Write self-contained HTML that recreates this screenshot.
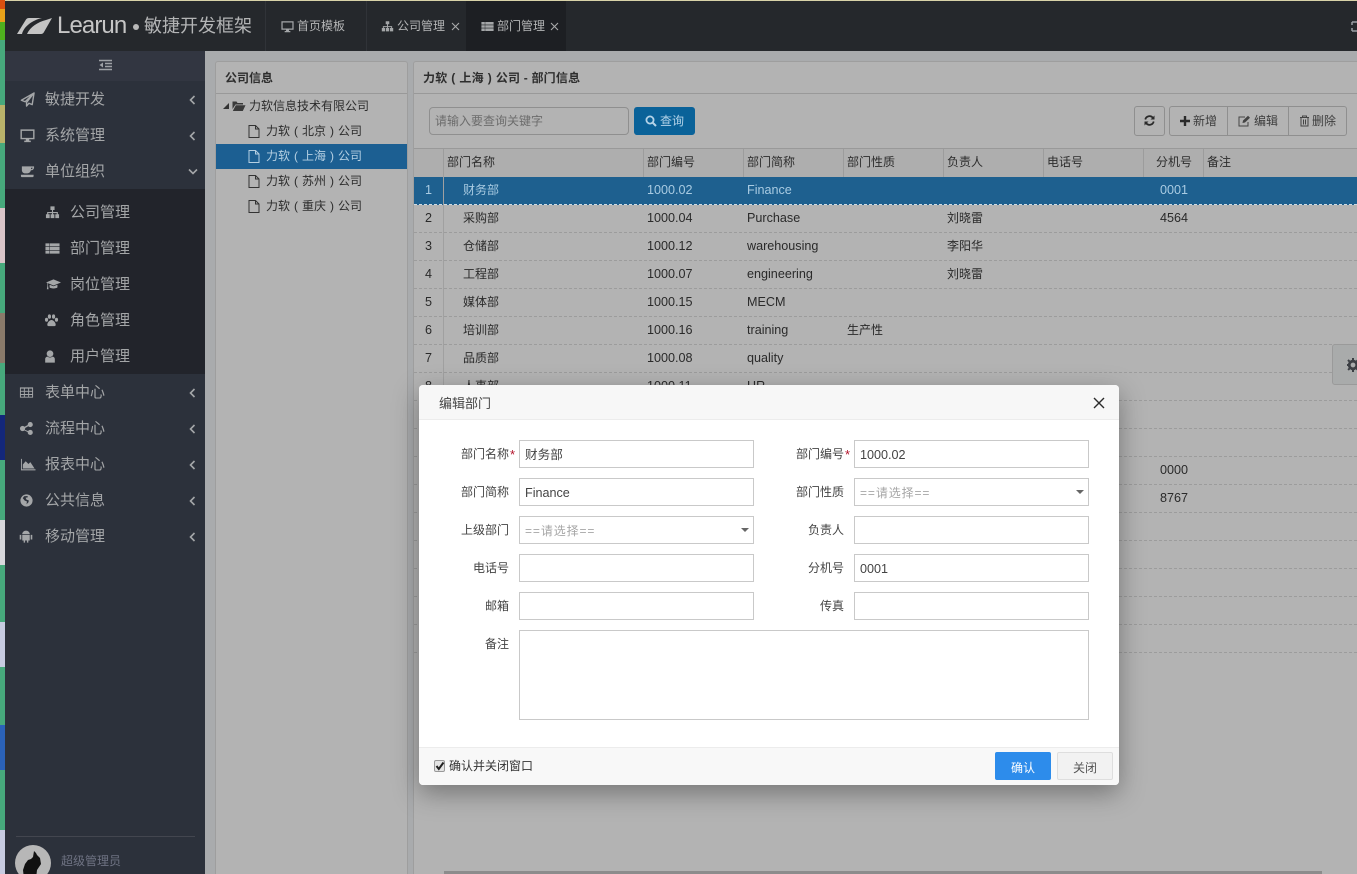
<!DOCTYPE html>
<html lang="zh-CN"><head><meta charset="utf-8"><title>部门管理</title>
<style>
*{box-sizing:border-box}
html,body{margin:0;padding:0;width:1357px;height:874px;overflow:hidden;background:#a9abad;font-family:"Liberation Sans","Noto Sans CJK SC",sans-serif;font-size:12px;color:#2b2b2b}
#w{position:relative;width:1357px;height:874px;overflow:hidden}
.a{position:absolute}
.t{position:absolute;white-space:nowrap;line-height:20px;height:20px}
svg{position:absolute;display:block}
.p{display:inline-block;width:1em;text-align:center}
.side{font-size:15px;color:#a4a6a8;left:45px}
.sub{font-size:15px;color:#a4a6a8;left:70px}
.ic{fill:#a4a6a8}
.ch{fill:none;stroke:#a4a6a8;stroke-width:1.6}
.tab{color:#b4b5b6;font-size:12px;top:16px}
.tr{color:#2c2c2c;font-size:12px;left:266px}
.row{position:absolute;left:414px;width:943px;height:28px;border-bottom:1px dashed #9c9c9c}
.row span{position:absolute;top:3px;line-height:20px;white-space:nowrap;font-size:12.6px;color:#2a2a2a}
.th{top:152px;color:#2d2d2d}
.vl{position:absolute;top:149px;height:28px;width:1px;background:#9c9c9c}
.lb{position:absolute;font-size:12px;color:#444;text-align:right;width:70px;line-height:20px;white-space:nowrap}
.in{position:absolute;width:235px;height:28px;border:1px solid #c9c9c9;background:#fff;font-size:12.6px;color:#444;padding-left:5px;line-height:28px;white-space:nowrap}
.ph{color:#a6a6a6;font-size:12px;letter-spacing:.9px}
.star{position:absolute;color:#b3122a;font-size:13px;line-height:20px}
.arr{position:absolute;width:0;height:0;border-left:4px solid transparent;border-right:4px solid transparent;border-top:4px solid #666}
</style></head><body><div id="w">
<svg width="0" height="0" style="position:absolute"><defs>
<symbol id="plane" viewBox="0 0 16 16"><path fill="none" stroke="#a4a6a8" stroke-width="1.500" stroke-linejoin="round" d="M15 1 1.500 8.800l4 1.600L15 1 7 11.200V15l2.500-3 3.500 1.500z"/></symbol>
<symbol id="desk" viewBox="0 0 16 16"><path fill-rule="evenodd" d="M.5 1.500h15v10.500H9.800v1.500h1.700V15h-7v-1.500h1.700V12H.5zM2 3v7.500h12V3z"/></symbol>
<symbol id="cup" viewBox="0 0 16 16"><path fill-rule="evenodd" d="M2 2.500h13v1.200a3 3 0 0 1-3 3h-.4C11 9 9.500 10 8 10H5.500C3.500 10 2 8.500 2 6.500zM11.800 4v1.400c1 0 1.700-.5 1.700-1.400zM1 11.500h13.500v1.500q-.3 1-1 1H2q-.8 0-1-1z"/></symbol>
<symbol id="site" viewBox="0 0 16 16"><path d="M5.800 1.500h4.400v3.800H8.600v2.200h5.100v2.300H15V14h-4V9.800h1.500V8.700H8.600v1.100H10V14H6V9.800h1.400V8.700H3.500v1.100H5V14H1V9.800h1.300V7.500h5.100V5.300H5.800z"/></symbol>
<symbol id="list" viewBox="0 0 16 16"><path d="M.5 2.500h4.200v3.200H.5zM5.200 2.500h10.300v3.200H5.200zM.5 6.400h4.200v3.200H.5zM5.200 6.400h10.300v3.200H5.200zM.5 10.300h4.200v3.200H.5zM5.200 10.300h10.300v3.200H5.200z"/></symbol>
<symbol id="cap" viewBox="0 0 16 16"><path d="M8 2.500 16 5.800 8 9 2.200 6.700v2.600l.5 3.700H.9l.6-3.700V6.400L0 5.800zM3.800 8.200 8 9.900l4.200-1.700v2.900C11 12.600 5 12.600 3.800 11.100z"/></symbol>
<symbol id="paw" viewBox="0 0 16 16"><ellipse cx="2.700" cy="7.200" rx="1.700" ry="2.100"/><ellipse cx="5.800" cy="3.800" rx="1.700" ry="2.300"/><ellipse cx="10.200" cy="3.800" rx="1.700" ry="2.300"/><ellipse cx="13.300" cy="7.200" rx="1.700" ry="2.100"/><path d="M8 7.500c2.200 0 4.500 3 4.500 5 0 2-2.300 1.500-4.500 1.500s-4.500.5-4.500-1.500c0-2 2.300-5 4.500-5z"/></symbol>
<symbol id="user" viewBox="0 0 16 16"><circle cx="8" cy="4.800" r="3.800"/><path d="M2.500 15V11c0-1.800 1.500-2.800 2.800-2.800C6.500 9.500 9.500 9.500 10.700 8.200c1.300 0 2.800 1 2.800 2.800v4z"/></symbol>
<symbol id="tab" viewBox="0 0 16 16"><path fill-rule="evenodd" d="M1 2.500h14v11H1zM2 3.800v2.400h3.200V3.800zM6.200 3.800v2.400h3.600V3.800zM10.800 3.800v2.400H14V3.800zM2 7.200v2.400h3.200V7.200zM6.200 7.200v2.400h3.600V7.200zM10.800 7.200v2.400H14V7.200zM2 10.600v1.900h3.200v-1.900zM6.200 10.600v1.900h3.600v-1.900zM10.800 10.600v1.900H14v-1.900z"/></symbol>
<symbol id="share" viewBox="0 0 16 16"><circle cx="12" cy="3.800" r="2.700"/><circle cx="12" cy="12.200" r="2.700"/><circle cx="3.800" cy="8" r="2.800"/><path d="M3.800 7.300 11.500 3l.7 1.300L4.500 8.700 12.200 11.700l-.5 1.300L3.800 9z"/></symbol>
<symbol id="area" viewBox="0 0 16 16"><path d="M.5 2H1.500v11H16v1.200H.5zM2.500 12.200V8l3-3.500 3 3 2-2 4.500 6.700z"/></symbol>
<symbol id="globe" viewBox="0 0 16 16"><path fill-rule="evenodd" d="M8 1.500a6.500 6.500 0 1 1 0 13 6.500 6.500 0 0 1 0-13zM4 5.500 6 8l2.500 1-.5 3 2-2 .5-2-2.500-1-1-2 2.500-.5L9 3.200 5.500 3.500z"/></symbol>
<symbol id="droid" viewBox="0 0 16 16"><path d="M4 5.500a4 3.800 0 0 1 8 0zM4 6.200h8v6H10.500v2.300H9v-2.300H7v2.300H5.500v-2.300H4zM1.300 6.200h1.700v5H1.300zM13 6.200h1.700v5H13z"/></symbol>
</defs></svg>

<!-- left strip -->
<div class="a" style="left:0;top:0;width:5px;height:874px;background:#47a97c"></div>
<div class="a" style="left:0;top:0;width:5px;height:9px;background:#d9500f"></div>
<div class="a" style="left:0;top:9px;width:5px;height:13px;background:#e8a21a"></div>
<div class="a" style="left:0;top:22px;width:5px;height:18px;background:#4fb01e"></div>
<div class="a" style="left:0;top:105px;width:5px;height:38px;background:#b9b26a"></div>
<div class="a" style="left:0;top:208px;width:5px;height:55px;background:#d9c4c8"></div>
<div class="a" style="left:0;top:313px;width:5px;height:50px;background:#8a7a6a"></div>
<div class="a" style="left:0;top:415px;width:5px;height:45px;background:#13277a"></div>
<div class="a" style="left:0;top:520px;width:5px;height:45px;background:#d8d8dc"></div>
<div class="a" style="left:0;top:622px;width:5px;height:45px;background:#c7cbe0"></div>
<div class="a" style="left:0;top:725px;width:5px;height:45px;background:#2b62b8"></div>
<div class="a" style="left:0;top:830px;width:5px;height:44px;background:#c7cbe0"></div>

<!-- header -->
<div class="a" style="left:5px;top:0;width:1352px;height:1px;background:#d8d2a8"></div>
<div class="a" style="left:5px;top:1px;width:1352px;height:50px;background:#25282c"></div>
<svg style="left:0;top:0" width="60" height="40"><path fill="#c4c4c4" d="M17 34 26 19.500Q27 18 29 18H42C33 20 24 26 22 34ZM27 34C30 27 38 22 46 20L52 18 44 32Q43 34 41 34Z"/></svg>
<div class="t" style="left:57px;top:14px;font-size:24px;line-height:24px;height:24px;color:#c6c6c6;letter-spacing:-.9px">Learun</div>
<div class="a" style="left:133px;top:24px;width:6px;height:6px;border-radius:50%;background:#b8b8b8"></div>
<div class="t" style="left:144px;top:14px;font-size:18px;line-height:24px;height:24px;color:#b4b5b6">敏捷开发框架</div>
<div class="a" style="left:265px;top:1px;width:1px;height:50px;background:#303338"></div>
<div class="a" style="left:366px;top:1px;width:1px;height:50px;background:#303338"></div>
<div class="a" style="left:466px;top:1px;width:100px;height:50px;background:#1d1f23"></div>
<svg class="ic" style="left:281px;top:20px" width="13" height="13"><use href="#desk"/></svg>
<div class="t tab" style="left:297px">首页模板</div>
<svg class="ic" style="left:381px;top:20px" width="13" height="13"><use href="#site"/></svg>
<div class="t tab" style="left:397px">公司管理</div>
<svg style="left:451px;top:22px" width="9" height="9"><path d="M1 1l7 7M8 1l-7 7" stroke="#a8a9aa" stroke-width="1.100"/></svg>
<svg class="ic" style="left:481px;top:20px" width="13" height="13"><use href="#list"/></svg>
<div class="t tab" style="left:497px">部门管理</div>
<svg style="left:550px;top:22px" width="9" height="9"><path d="M1 1l7 7M8 1l-7 7" stroke="#a8a9aa" stroke-width="1.100"/></svg>
<svg style="left:1351px;top:20px" width="6" height="13"><path d="M1 2h5M1 2v3M1 11h5M1 11V8" stroke="#9a9da3" stroke-width="1.500" fill="none"/></svg>

<!-- sidebar -->
<div class="a" style="left:5px;top:51px;width:200px;height:823px;background:#2c313b"></div>
<div class="a" style="left:5px;top:51px;width:200px;height:30px;background:#323641"></div>
<div class="a" style="left:5px;top:189px;width:200px;height:185px;background:#22242b"></div>
<svg style="left:98px;top:59px" width="15" height="13"><path d="M1 1.500h13M7 4.500h7M7 7.500h7M1 10.500h13" stroke="#9ea1a6" stroke-width="1.500"/><path d="M5 3.500v5l-3.500-2.500z" fill="#9ea1a6"/></svg>

<svg style="left:20px;top:92px" width="15" height="15"><use href="#plane"/></svg><div class="t side" style="top:90px">敏捷开发</div>
<svg class="ic" style="left:20px;top:128px" width="15" height="15"><use href="#desk"/></svg><div class="t side" style="top:126px">系统管理</div>
<svg class="ic" style="left:20px;top:164px" width="15" height="15"><use href="#cup"/></svg><div class="t side" style="top:162px">单位组织</div>
<svg class="ch" style="left:189px;top:95px" width="7" height="10"><path d="M5.500 1 1.500 5l4 4"/></svg>
<svg class="ch" style="left:189px;top:131px" width="7" height="10"><path d="M5.500 1 1.500 5l4 4"/></svg>
<svg class="ch" style="left:188px;top:168px" width="10" height="7"><path d="M1 1.500l4 4 4-4"/></svg>

<svg class="ic" style="left:45px;top:205px" width="15" height="15"><use href="#site"/></svg><div class="t sub" style="top:203px">公司管理</div>
<svg class="ic" style="left:45px;top:241px" width="15" height="15"><use href="#list"/></svg><div class="t sub" style="top:239px">部门管理</div>
<svg class="ic" style="left:45px;top:277px" width="17" height="15"><use href="#cap"/></svg><div class="t sub" style="top:275px">岗位管理</div>
<svg class="ic" style="left:44px;top:313px" width="15" height="15"><use href="#paw"/></svg><div class="t sub" style="top:311px">角色管理</div>
<svg class="ic" style="left:43px;top:349px" width="14" height="15"><use href="#user"/></svg><div class="t sub" style="top:347px">用户管理</div>

<svg class="ic" style="left:19px;top:385px" width="15" height="15"><use href="#tab"/></svg><div class="t side" style="top:383px">表单中心</div>
<svg class="ic" style="left:19px;top:421px" width="15" height="15"><use href="#share"/></svg><div class="t side" style="top:419px">流程中心</div>
<svg class="ic" style="left:20px;top:457px" width="16" height="15"><use href="#area"/></svg><div class="t side" style="top:455px">报表中心</div>
<svg class="ic" style="left:19px;top:493px" width="15" height="15"><use href="#globe"/></svg><div class="t side" style="top:491px">公共信息</div>
<svg class="ic" style="left:18px;top:529px" width="16" height="15"><use href="#droid"/></svg><div class="t side" style="top:527px">移动管理</div>
<svg class="ch" style="left:189px;top:388px" width="7" height="10"><path d="M5.500 1 1.500 5l4 4"/></svg>
<svg class="ch" style="left:189px;top:424px" width="7" height="10"><path d="M5.500 1 1.500 5l4 4"/></svg>
<svg class="ch" style="left:189px;top:460px" width="7" height="10"><path d="M5.500 1 1.500 5l4 4"/></svg>
<svg class="ch" style="left:189px;top:496px" width="7" height="10"><path d="M5.500 1 1.500 5l4 4"/></svg>
<svg class="ch" style="left:189px;top:532px" width="7" height="10"><path d="M5.500 1 1.500 5l4 4"/></svg>

<div class="a" style="left:16px;top:836px;width:179px;height:1px;background:#43464f"></div>
<div class="a" style="left:15px;top:845px;width:36px;height:36px;border-radius:50%;background:#b7b7b7;overflow:hidden">
<svg style="left:6px;top:5px" width="24" height="29"><path d="M13 1l2 2 1 2 3 3 1 6-4 6-1 9H3l-1-9 2-6 3-4 3-1 2-2z" fill="#111"/></svg></div>
<div class="t" style="left:61px;top:851px;font-size:12px;color:#6e7282">超级管理员</div>

<!-- left panel -->
<div class="a" style="left:215px;top:61px;width:193px;height:830px;background:#b3b3b3;border:1px solid #9e9e9e;border-radius:3px"></div>
<div class="a" style="left:216px;top:93px;width:191px;height:1px;background:#999"></div>
<div class="t" style="left:225px;top:68px;font-weight:bold;color:#2e2e2e;font-size:12px">公司信息</div>
<svg style="left:222px;top:102px" width="8" height="8"><path d="M7 1v6H1z" fill="#333"/></svg>
<svg style="left:232px;top:100px" width="14" height="12"><path d="M.5 1.500h4l1 1.500h5.500v1.500H3.500L.5 9zM3.800 5.200H13.500L10.800 11H.8z" fill="#3a3a3a"/></svg>
<div class="t" style="left:249px;top:96px;color:#2c2c2c">力软信息技术有限公司</div>
<div class="a" style="left:216px;top:144px;width:191px;height:25px;background:#1c5f92"></div>
<svg style="left:248px;top:125px" width="12" height="13"><path d="M1 .5h6.500L11 4v8.500H1zM7.500.5V4H11" fill="none" stroke="#333"/></svg>
<div class="t tr" style="top:121px">力软<span class="p">(</span>北京<span class="p">)</span>公司</div>
<svg style="left:248px;top:150px" width="12" height="13"><path d="M1 .5h6.500L11 4v8.500H1zM7.500.5V4H11" fill="none" stroke="#b4cfe2"/></svg>
<div class="t tr" style="top:146px;color:#b4cfe2">力软<span class="p">(</span>上海<span class="p">)</span>公司</div>
<svg style="left:248px;top:175px" width="12" height="13"><path d="M1 .5h6.500L11 4v8.500H1zM7.500.5V4H11" fill="none" stroke="#333"/></svg>
<div class="t tr" style="top:171px">力软<span class="p">(</span>苏州<span class="p">)</span>公司</div>
<svg style="left:248px;top:200px" width="12" height="13"><path d="M1 .5h6.500L11 4v8.500H1zM7.500.5V4H11" fill="none" stroke="#333"/></svg>
<div class="t tr" style="top:196px">力软<span class="p">(</span>重庆<span class="p">)</span>公司</div>

<!-- right panel -->
<div class="a" style="left:413px;top:61px;width:960px;height:830px;background:#b3b3b3;border:1px solid #9e9e9e;border-radius:3px"></div>
<div class="a" style="left:414px;top:93px;width:943px;height:1px;background:#999"></div>
<div class="t" style="left:423px;top:68px;font-weight:bold;color:#2e2e2e;font-size:12px;letter-spacing:.2px">力软<span class="p">(</span>上海<span class="p">)</span>公司 - 部门信息</div>
<div class="a" style="left:429px;top:107px;width:200px;height:28px;border:1px solid #8f8f8f;border-radius:4px"></div>
<div class="t" style="left:435px;top:111px;color:#6c6c6c">请输入要查询关键字</div>
<div class="a" style="left:634px;top:107px;width:61px;height:28px;background:#0a6299;border-radius:3px"></div>
<svg style="left:645px;top:115px" width="12" height="12"><circle cx="5" cy="5" r="3.600" fill="none" stroke="#b4d3e8" stroke-width="1.800"/><path d="M7.500 7.500l3.500 3.500" stroke="#b4d3e8" stroke-width="2"/></svg>
<div class="t" style="left:660px;top:111px;color:#b4d3e8">查询</div>

<div class="a" style="left:1134px;top:106px;width:31px;height:30px;border:1px solid #8f8f8f;border-radius:3px"></div>
<svg style="left:1144px;top:115px" width="11" height="11"><path d="M1.300 4.500A4.300 4.300 0 0 1 9 3M9.700 6.500A4.300 4.300 0 0 1 2 8" fill="none" stroke="#2a2a2a" stroke-width="1.700"/><path d="M10.500.5v4h-4zM.5 10.500v-4h4z" fill="#2a2a2a"/></svg>
<div class="a" style="left:1169px;top:106px;width:178px;height:30px;border:1px solid #8f8f8f;border-radius:3px"></div>
<div class="a" style="left:1227px;top:106px;width:1px;height:30px;background:#8f8f8f"></div>
<div class="a" style="left:1288px;top:106px;width:1px;height:30px;background:#8f8f8f"></div>
<svg style="left:1180px;top:116px" width="10" height="10"><path d="M3.800 0h2.400v3.800H10v2.400H6.200V10H3.800V6.200H0V3.800h3.800z" fill="#2a2a2a"/></svg>
<div class="t" style="left:1193px;top:111px;color:#3d3d3d">新增</div>
<svg style="left:1238px;top:115px" width="13" height="12"><path d="M10 7v4H1V2h6" fill="none" stroke="#444"/><path d="M4.500 8 5 5.500 10 .8l2 2L7 7.500z" fill="#444"/></svg>
<div class="t" style="left:1254px;top:111px;color:#3d3d3d">编辑</div>
<svg style="left:1299px;top:115px" width="11" height="12"><path d="M1 2.500h9M3.500 2.500V1h4v1.500M2 3v8h7V3M4.500 4.500v5M6.500 4.500v5" fill="none" stroke="#444"/></svg>
<div class="t" style="left:1312px;top:111px;color:#3d3d3d">删除</div>

<!-- table head -->
<div class="a" style="left:414px;top:148px;width:943px;height:29px;background:#aeaeae;border-top:1px solid #999"></div>
<div class="vl" style="left:443px"></div><div class="vl" style="left:643px"></div><div class="vl" style="left:743px"></div><div class="vl" style="left:843px"></div><div class="vl" style="left:943px"></div><div class="vl" style="left:1043px"></div><div class="vl" style="left:1143px"></div><div class="vl" style="left:1203px"></div>
<div class="t th" style="left:447px">部门名称</div>
<div class="t th" style="left:647px">部门编号</div>
<div class="t th" style="left:747px">部门简称</div>
<div class="t th" style="left:847px">部门性质</div>
<div class="t th" style="left:947px">负责人</div>
<div class="t th" style="left:1047px">电话号</div>
<div class="t th" style="left:1156px">分机号</div>
<div class="t th" style="left:1207px">备注</div>

<!-- rows -->
<div class="row" style="top:177px;background:#1e608f;border-bottom-color:#cfdbe3"><span style="left:11px;color:#a9cbe2">1</span><span style="left:49px;color:#a9cbe2;font-size:12px">财务部</span><span style="left:233px;color:#a9cbe2">1000.02</span><span style="left:333px;color:#a9cbe2">Finance</span><span style="left:746px;color:#a9cbe2">0001</span></div>
<div class="row" style="top:205px"><span style="left:11px">2</span><span style="left:49px;font-size:12px">采购部</span><span style="left:233px">1000.04</span><span style="left:333px">Purchase</span><span style="left:533px;font-size:12px">刘晓雷</span><span style="left:746px">4564</span></div>
<div class="row" style="top:233px"><span style="left:11px">3</span><span style="left:49px;font-size:12px">仓储部</span><span style="left:233px">1000.12</span><span style="left:333px">warehousing</span><span style="left:533px;font-size:12px">李阳华</span></div>
<div class="row" style="top:261px"><span style="left:11px">4</span><span style="left:49px;font-size:12px">工程部</span><span style="left:233px">1000.07</span><span style="left:333px">engineering</span><span style="left:533px;font-size:12px">刘晓雷</span></div>
<div class="row" style="top:289px"><span style="left:11px">5</span><span style="left:49px;font-size:12px">媒体部</span><span style="left:233px">1000.15</span><span style="left:333px">MECM</span></div>
<div class="row" style="top:317px"><span style="left:11px">6</span><span style="left:49px;font-size:12px">培训部</span><span style="left:233px">1000.16</span><span style="left:333px">training</span><span style="left:433px;font-size:12px">生产性</span></div>
<div class="row" style="top:345px"><span style="left:11px">7</span><span style="left:49px;font-size:12px">品质部</span><span style="left:233px">1000.08</span><span style="left:333px">quality</span></div>
<div class="row" style="top:373px"><span style="left:11px">8</span><span style="left:49px;font-size:12px">人事部</span><span style="left:233px">1000.11</span><span style="left:333px">HR</span></div>
<div class="row" style="top:401px"></div>
<div class="row" style="top:429px"></div>
<div class="row" style="top:457px"><span style="left:746px">0000</span></div>
<div class="row" style="top:485px"><span style="left:746px">8767</span></div>
<div class="row" style="top:513px"></div>
<div class="row" style="top:541px"></div>
<div class="row" style="top:569px"></div>
<div class="row" style="top:597px"></div>
<div class="row" style="top:625px"></div>
<div class="a" style="left:443px;top:177px;width:1px;height:476px;background:#a0a0a0"></div>

<div class="a" style="left:444px;top:871px;width:878px;height:3px;background:#8c8c8c"></div>
<div class="a" style="left:1332px;top:344px;width:30px;height:41px;background:#a9abab;border:1px solid #9a9a9a;border-radius:3px 0 0 3px"></div>
<svg style="left:1347px;top:358px" width="10" height="15"><circle cx="6" cy="7" r="3.800" fill="none" stroke="#3c3f44" stroke-width="2.800"/><path d="M6 0v14M-1 7h14M1 2l10 10M11 2 1 12" stroke="#3c3f44" stroke-width="2" stroke-dasharray="2 10"/></svg>

<!-- modal -->
<div class="a" style="left:419px;top:385px;width:700px;height:400px;background:#fff;border-radius:4px;box-shadow:0 8px 26px rgba(0,0,0,.35);overflow:hidden">
<div class="a" style="left:0;top:0;width:700px;height:35px;background:#f7f7f7;border-bottom:1px solid #ececec"></div>
<div class="a" style="left:0;top:362px;width:700px;height:38px;background:#f8f8f8;border-top:1px solid #ececec"></div>
</div>
<div class="t" style="left:439px;top:394px;font-size:13px;color:#444">编辑部门</div>
<svg style="left:1093px;top:397px" width="12" height="12"><path d="M1 1l10 10M11 1 1 11" stroke="#2b2b2b" stroke-width="1.400"/></svg>

<div class="lb" style="left:439px;top:444px">部门名称</div><div class="star" style="left:510px;top:445px">*</div>
<div class="in" style="left:519px;top:440px">财务部</div>
<div class="lb" style="left:774px;top:444px">部门编号</div><div class="star" style="left:845px;top:445px">*</div>
<div class="in" style="left:854px;top:440px">1000.02</div>

<div class="lb" style="left:439px;top:482px">部门简称</div>
<div class="in" style="left:519px;top:478px">Finance</div>
<div class="lb" style="left:774px;top:482px">部门性质</div>
<div class="in ph" style="left:854px;top:478px">==请选择==</div><div class="arr" style="left:1076px;top:490px"></div>

<div class="lb" style="left:439px;top:520px">上级部门</div>
<div class="in ph" style="left:519px;top:516px">==请选择==</div><div class="arr" style="left:741px;top:528px"></div>
<div class="lb" style="left:774px;top:520px">负责人</div>
<div class="in" style="left:854px;top:516px"></div>

<div class="lb" style="left:439px;top:558px">电话号</div>
<div class="in" style="left:519px;top:554px"></div>
<div class="lb" style="left:774px;top:558px">分机号</div>
<div class="in" style="left:854px;top:554px">0001</div>

<div class="lb" style="left:439px;top:596px">邮箱</div>
<div class="in" style="left:519px;top:592px"></div>
<div class="lb" style="left:774px;top:596px">传真</div>
<div class="in" style="left:854px;top:592px"></div>

<div class="lb" style="left:439px;top:634px">备注</div>
<div class="in" style="left:519px;top:630px;width:570px;height:90px"></div>

<div class="a" style="left:434px;top:760px;width:11px;height:12px;background:#e4e4e4;border:1px solid #999;border-radius:2px"></div>
<svg style="left:435px;top:761px" width="10" height="10"><path d="M1.500 5l2.300 3L8.500 1.500" fill="none" stroke="#222" stroke-width="2"/></svg>
<div class="t" style="left:449px;top:756px;color:#333">确认并关闭窗口</div>
<div class="a" style="left:995px;top:752px;width:56px;height:28px;background:#2d8ceb;border-radius:2px"></div>
<div class="t" style="left:1011px;top:758px;color:#fff">确认</div>
<div class="a" style="left:1057px;top:752px;width:56px;height:28px;background:#f2f2f2;border:1px solid #dedede;border-radius:2px"></div>
<div class="t" style="left:1073px;top:758px;color:#555">关闭</div>
</div></body></html>
